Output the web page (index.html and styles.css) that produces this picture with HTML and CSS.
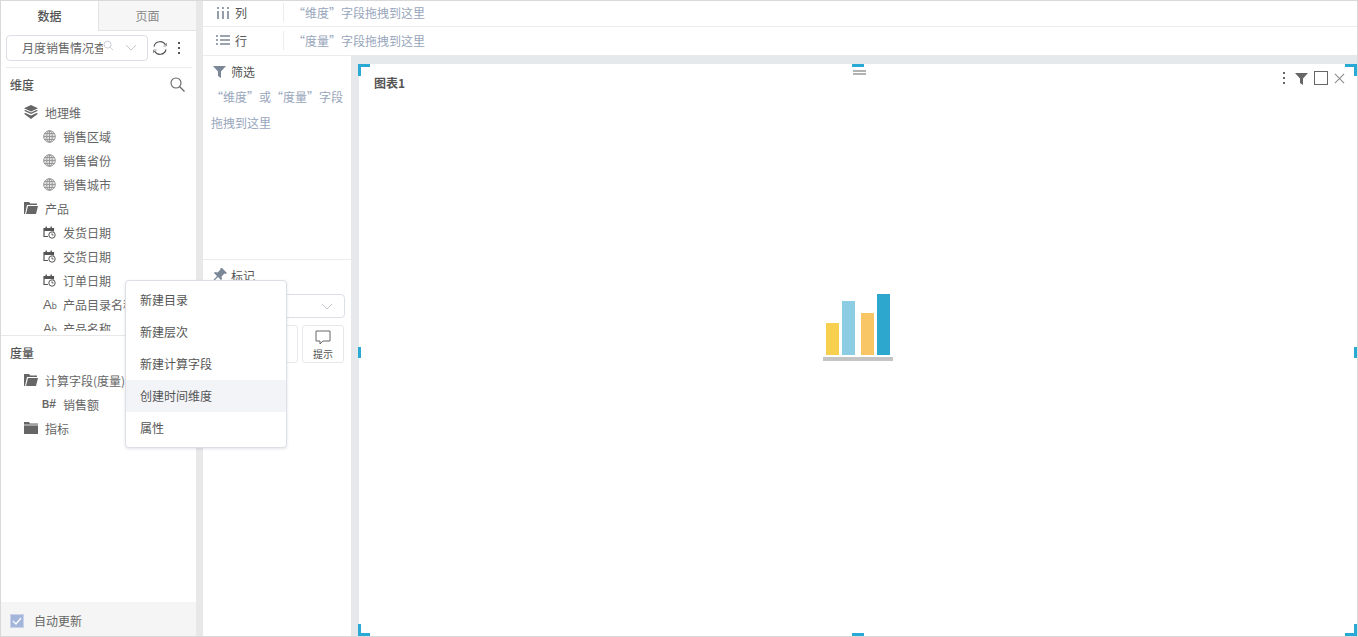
FILE: index.html
```html
<!DOCTYPE html>
<html lang="en">
<head>
  <meta charset="UTF-8" />
  <title>图表设计</title>
  <link rel="stylesheet" href="styles.css">
</head>
<body>
  <svg class="defs" width="0" height="0">
    <symbol id="i-globe" viewBox="0 0 13 13"><circle cx="6.500" cy="6.500" r="6" fill="#e2e2e2"/><g fill="none" stroke="#999" stroke-width="1"><circle cx="6.500" cy="6.500" r="5.800"/><ellipse cx="6.500" cy="6.500" rx="2.800" ry="5.800"/><path d="M.7 6.500h11.600M1.400 3.500h10.200M1.400 9.500h10.200M6.500 .7v11.600"/></g></symbol>
    <symbol id="i-open" viewBox="0 0 14 12"><path d="M0 0h5l1.500 1.500H13V3H3L1 12H0z" fill="#666"/><path d="M4 4h10l-2 8H2z" fill="#666"/></symbol>
    <symbol id="i-closed" viewBox="0 0 14 12"><path d="M0 0h5l1 1.500h8V12H0z" fill="#666"/><path d="M0 3h14" stroke="#fff" stroke-width=".8"/></symbol>
    <symbol id="i-cal" viewBox="0 0 13 13"><path d="M5 10.500H1v-8h9.500v3" fill="none" stroke="#555" stroke-width="1.200"/><path d="M1 2.500h9.500V5H1zM2.500 .5h1.400v2H2.500zM7.500 .5h1.400v2H7.500z" fill="#555"/><circle cx="9" cy="9" r="3.200" fill="#fff" stroke="#555"/><path d="M9 7.300V9h1.600" fill="none" stroke="#555" stroke-width=".9"/></symbol>
  </svg>
  <div class="frame">
    <aside class="left">
      <div class="tabs">
        <div class="tab active">数据</div>
        <div class="tab">页面</div>
      </div>
      <div class="src-row">
        <div class="src-select">
          <span class="src-name">月度销售情况查询</span>
          <svg class="src-search" width="11" height="11" viewBox="0 0 12 12"><circle cx="5" cy="5" r="3.800" fill="none" stroke="#c4c8d0"/><path d="M8 8l3 3" stroke="#c4c8d0"/></svg>
          <svg class="src-arrow" width="12" height="7" viewBox="0 0 12 7"><path d="M1 1l5 5 5-5" fill="none" stroke="#c4c8d0"/></svg>
        </div>
        <svg class="refresh" width="16" height="16" viewBox="0 0 16 16"><path d="M2 6.500A6.200 6.200 0 0 1 13.500 5M14 9.500A6.200 6.200 0 0 1 2.500 11" fill="none" stroke="#555" stroke-width="1.200"/><path d="M14.500 3v3h-3M1.500 13v-3h3" fill="none" stroke="#555" stroke-width=".6"/></svg>
        <div class="dots"><i></i><i></i><i></i></div>
      </div>
      <section class="dims">
        <div class="sec-head">
          <span>维度</span>
          <svg width="15" height="15" viewBox="0 0 15 15"><circle cx="6" cy="6" r="5" fill="none" stroke="#666" stroke-width="1.100"/><path d="M9.500 9.500l5 5" stroke="#666" stroke-width="1.300"/></svg>
        </div>
        <div class="row lv1">
          <svg class="ic" width="14" height="14" viewBox="0 0 14 14"><path d="M7 0l7 3.300-7 3.300L0 3.300z" fill="#666"/><path d="M1.500 5L7 7.600 12.500 5 14 5.800 7 9.100 0 5.800z" fill="#666"/><path d="M1.500 7.900L7 10.500l5.500-2.600 1.500.8L7 14 0 8.700z" fill="#666"/></svg>
          地理维
        </div>
        <div class="row lv2"><svg class="ic" width="13" height="13"><use href="#i-globe"/></svg>销售区域</div>
        <div class="row lv2"><svg class="ic" width="13" height="13"><use href="#i-globe"/></svg>销售省份</div>
        <div class="row lv2"><svg class="ic" width="13" height="13"><use href="#i-globe"/></svg>销售城市</div>
        <div class="row lv1"><svg class="ic" width="14" height="12"><use href="#i-open"/></svg>产品</div>
        <div class="row lv2"><svg class="ic" width="13" height="13"><use href="#i-cal"/></svg>发货日期</div>
        <div class="row lv2"><svg class="ic" width="13" height="13"><use href="#i-cal"/></svg>交货日期</div>
        <div class="row lv2"><svg class="ic" width="13" height="13"><use href="#i-cal"/></svg>订单日期</div>
        <div class="row lv2"><span class="ab">A<small>b</small></span>产品目录名称</div>
        <div class="row lv2"><span class="ab">A<small>b</small></span>产品名称</div>
      </section>
      <section class="measures">
        <div class="sec-head"><span>度量</span></div>
        <div class="row lv1"><svg class="ic" width="14" height="12"><use href="#i-open"/></svg>计算字段(度量)</div>
        <div class="row lv2"><span class="ab num"><small>B</small>#</span>销售额</div>
        <div class="row lv1"><svg class="ic" width="14" height="12"><use href="#i-closed"/></svg>指标</div>
      </section>
      <footer class="auto">
        <span class="check"><svg width="10" height="8" viewBox="0 0 10 8"><path d="M1 4l3 3 5-6" fill="none" stroke="#fff" stroke-width="1.200"/></svg></span>
        自动更新
      </footer>
    </aside>

    <main class="work">
      <div class="shelf">
        <span class="shelf-name">
          <svg width="14" height="12" viewBox="0 0 14 12"><path d="M2 4v8M7 4v8M12 4v8M2 0v2M7 0v2M12 0v2" stroke="#7a8797" stroke-width="1.600"/></svg>
          列
        </span>
        <span class="shelf-drop">“维度”字段拖拽到这里</span>
      </div>
      <div class="shelf">
        <span class="shelf-name">
          <svg width="14" height="12" viewBox="0 0 14 12"><path d="M4 2h10M4 6h10M4 10h10M0 2h2M0 6h2M0 10h2" stroke="#7a8797" stroke-width="1.400"/></svg>
          行
        </span>
        <span class="shelf-drop">“度量”字段拖拽到这里</span>
      </div>
      <div class="body">
        <div class="mid">
          <div class="filter">
            <div class="mid-head">
              <svg width="14" height="13" viewBox="0 0 14 13"><path d="M0 1h13L8 6.500V13L5 11V6.500z" fill="#7a8797"/></svg>
              筛选
            </div>
            <p class="hint">“维度”或“度量”字段拖拽到这里</p>
          </div>
          <div class="marks">
            <div class="mid-head">
              <svg width="14" height="14" viewBox="0 0 14 14"><path d="M9 0l5 5-1.500 1-1-.5-3 3 .5 2.500-1 1-3-3L1 13 0 13.500 .5 12l3.500-4-3-3 1-1 2.500.5 3-3-.5-1z" fill="#7a8797"/></svg>
              标记
            </div>
            <div class="mark-select">
              <svg width="12" height="7" viewBox="0 0 12 7"><path d="M1 1l5 5 5-5" fill="none" stroke="#c4c8d0"/></svg>
            </div>
            <div class="mark-btns">
              <div class="mark-btn"></div>
              <div class="mark-btn">
                <svg width="16" height="15" viewBox="0 0 16 15"><path d="M1 1h14v10H8l-3 3v-3H1z" fill="none" stroke="#666"/></svg>
                <span class="mark-label">提示</span>
              </div>
            </div>
          </div>
        </div>
        <div class="canvas">
          <div class="chart">
            <i class="h tl"></i><i class="h tr"></i><i class="h bl"></i><i class="h br"></i>
            <i class="h ml"></i><i class="h mr"></i><i class="h mb"></i><i class="h mt"></i>
            <svg class="grip" width="13" height="5" viewBox="0 0 13 5"><path d="M0 1h13M0 4h13" stroke="#999" stroke-width="1.500"/></svg>
            <div class="chart-head">
              <span class="chart-title">图表1</span>
              <div class="chart-tools">
                <div class="dots"><i></i><i></i><i></i></div>
                <svg class="tool-filter" width="13" height="13" viewBox="0 0 13 13"><path d="M0 1h13L8 6.500V13L5 11V6.500z" fill="#666"/></svg>
                <span class="square"></span>
                <svg width="11" height="11" viewBox="0 0 12 12"><path d="M1 1l10 10M11 1L1 11" stroke="#888" stroke-width="1.100"/></svg>
              </div>
            </div>
            <div class="chart-empty">
              <svg width="70" height="67" viewBox="0 0 70 67">
                <rect x="3" y="29" width="13" height="32" fill="#f7d04f"/>
                <rect x="19" y="7" width="13" height="54" fill="#8ccde3"/>
                <rect x="38" y="19" width="13" height="42" fill="#f9c666"/>
                <rect x="54" y="0" width="13" height="61" fill="#2ea7cf"/>
                <rect x="0" y="63" width="70" height="4" fill="#c4c4c4"/>
              </svg>
            </div>
          </div>
        </div>
      </div>
    </main>

    <ul class="menu">
      <li>新建目录</li>
      <li>新建层次</li>
      <li>新建计算字段</li>
      <li class="hover">创建时间维度</li>
      <li>属性</li>
    </ul>
  </div>
</body>
</html>
```

FILE: styles.css
```css
* {
  box-sizing: border-box;
}
html, body {
  margin: 0;
  height: 100%;
  overflow: hidden;
}
body {
  font-family: "Noto Sans CJK SC", "Liberation Sans", sans-serif;
  font-size: 12px;
  color: #555;
  background: #fff;
}
.defs {
  position: absolute;
}
.frame {
  position: relative;
  display: flex;
  width: 1358px;
  height: 637px;
  border: 1px solid #d9d9d9;
}

/* left panel */
.left {
  width: 195px;
  flex-shrink: 0;
  display: flex;
  flex-direction: column;
}
.tabs {
  display: flex;
  height: 30px;
}
.tab {
  width: 98px;
  line-height: 30px;
  text-align: center;
  color: #888;
  background: #f6f6f6;
  border-bottom: 1px solid #e4e4e4;
  border-left: 1px solid #e4e4e4;
}
.tab.active {
  width: 97px;
  color: #555;
  font-weight: 500;
  background: #fff;
  border: 0;
}
.src-row {
  display: flex;
  align-items: center;
  height: 37px;
  margin: 0 4px 0 5px;
  padding-bottom: 3px;
  border-bottom: 1px solid #ececec;
}
.src-select {
  display: flex;
  align-items: center;
  width: 142px;
  height: 26px;
  padding-left: 15px;
  border: 1px solid #dcdfe6;
  border-radius: 4px;
}
.src-name {
  width: 81px;
  overflow: hidden;
  white-space: nowrap;
  color: #666;
}
.src-search {
  margin-top: -5px;
}
.src-arrow {
  margin-left: 11px;
}
.refresh {
  margin-left: 4px;
}
.dots {
  display: flex;
  flex-direction: column;
  gap: 3px;
  width: 2px;
}
.dots i {
  width: 2px;
  height: 2px;
  background: #555;
}
.src-row .dots {
  margin-left: 10px;
}
.dims {
  height: 263px;
  margin-bottom: 4px;
  overflow: hidden;
}
.measures {
  flex: 1;
  border-top: 1px solid #e8e8e8;
}
.sec-head {
  display: flex;
  align-items: center;
  justify-content: space-between;
  height: 32px;
  padding: 0 11px 0 9px;
  font-weight: 500;
  color: #555;
}
.row {
  display: flex;
  align-items: center;
  height: 24px;
  white-space: nowrap;
  color: #666;
}
.lv1 {
  padding-left: 23px;
}
.lv2 {
  padding-left: 42px;
}
.ic {
  flex-shrink: 0;
  margin-right: 7px;
}
.ab {
  width: 20px;
  font-family: "Liberation Sans", sans-serif;
  font-size: 13px;
  color: #666;
}
.ab small {
  font-size: 9px;
}
.ab.num {
  margin-left: -1px;
  width: 21px;
  font-weight: 700;
  font-size: 12px;
}
.ab.num small {
  font-size: 10px;
}
.auto {
  display: flex;
  align-items: center;
  height: 34px;
  padding: 3px 0 0 9px;
  background: #f5f5f5;
  color: #666;
}
.check {
  display: flex;
  align-items: center;
  justify-content: center;
  width: 14px;
  height: 14px;
  margin-right: 10px;
  background: #a3b5da;
  border: 1px solid #c9d2e6;
}

/* shelves and work area */
.work {
  flex: 1;
  display: flex;
  flex-direction: column;
  margin-left: 7px;
  min-width: 0;
  box-shadow: -7px 0 0 #e8e8e8;
}
.shelf {
  display: flex;
  align-items: center;
  height: 26px;
  padding-bottom: 2px;
  border-bottom: 1px solid #ececec;
  flex-shrink: 0;
}
.shelf + .shelf {
  height: 28px;
  border-bottom: 0;
}
.shelf-name {
  display: flex;
  align-items: center;
  gap: 5px;
  width: 81px;
  height: 19px;
  padding-left: 13px;
  font-size: 12px;
  color: #555;
  border-right: 1px solid #ececec;
}
.shelf-drop {
  padding-left: 9px;
  color: #98a6bc;
}
.body {
  flex: 1;
  display: flex;
  min-height: 0;
}
.mid {
  width: 148px;
  flex-shrink: 0;
  display: flex;
  flex-direction: column;
  border-top: 1px solid #ececec;
}
.filter {
  height: 204px;
  border-bottom: 1px solid #ececec;
}
.mid-head {
  display: flex;
  align-items: center;
  gap: 4px;
  height: 30px;
  padding-left: 10px;
  color: #555;
}
.hint {
  margin: -2px 7px 0 8px;
  line-height: 26px;
  color: #98a6bc;
}
.marks {
  flex: 1;
}
.mark-select {
  display: flex;
  align-items: center;
  justify-content: flex-end;
  height: 24px;
  margin: 4px 6px 7px 10px;
  padding-right: 11px;
  border: 1px solid #dcdfe6;
  border-radius: 4px;
}
.mark-btns {
  display: flex;
  gap: 4px;
  justify-content: flex-end;
  padding-right: 7px;
}
.mark-btn {
  display: flex;
  flex-direction: column;
  align-items: center;
  width: 42px;
  height: 38px;
  padding-top: 4px;
  font-size: 10px;
  border: 1px solid #e6e8ec;
  border-radius: 3px;
}
.mark-label {
  margin-top: 2px;
  line-height: 14px;
}
.canvas {
  flex: 1;
  min-width: 0;
  padding: 9px 0 0 8px;
  background: #e6e9ec;
}
.chart {
  position: relative;
  height: 100%;
  background: #fff;
}
.h {
  position: absolute;
  background: #29a9d3;
}
.tl, .tr, .bl, .br {
  width: 12px;
  height: 12px;
  background: none;
  border: 0 solid #29a9d3;
}
.tl { top: 0; left: -1px; border-width: 3px 0 0 3px; }
.tr { top: 0; right: 0; border-width: 3px 3px 0 0; }
.bl { bottom: 0; left: -1px; border-width: 0 0 3px 3px; }
.br { bottom: 0; right: 0; border-width: 0 3px 3px 0; }
.ml, .mr {
  top: 283px;
  width: 3px;
  height: 11px;
}
.ml { left: -1px; }
.mr { right: 0; }
.mb, .mt {
  left: 493px;
  width: 12px;
  height: 3px;
}
.mb { bottom: 0; }
.mt { top: 0; }
.grip {
  position: absolute;
  top: 6px;
  left: 494px;
}
.chart-head {
  display: flex;
  align-items: center;
  justify-content: space-between;
  height: 36px;
  padding: 0 12px 0 15px;
}
.chart-title {
  margin-top: 1px;
  font-weight: 700;
  color: #555;
}
.chart-tools {
  display: flex;
  align-items: center;
  gap: 6px;
  margin-top: -8px;
}
.chart-tools .dots i {
  background: #666;
}
.tool-filter {
  margin-left: 4px;
}
.square {
  width: 14px;
  height: 14px;
  border: 1px solid #666;
}
.chart-empty {
  display: flex;
  justify-content: center;
  margin-top: 194px;
}

/* context menu */
.menu {
  position: absolute;
  top: 279px;
  left: 124px;
  width: 162px;
  margin: 0;
  padding: 3px 0;
  list-style: none;
  background: #fff;
  border: 1px solid #dcdfe6;
  border-radius: 4px;
  box-shadow: 0 1px 3px rgba(90, 100, 130, 0.18);
}
.menu li {
  height: 32px;
  line-height: 32px;
  padding-left: 14px;
  color: #555;
}
.menu li.hover {
  background: #f3f4f8;
}
```
